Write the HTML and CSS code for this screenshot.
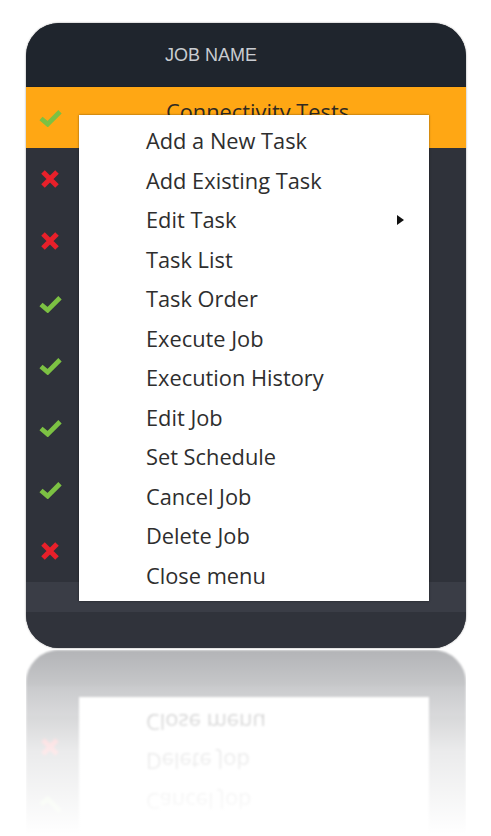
FILE: index.html
```html
<!DOCTYPE html>
<html>
<head>
<meta charset="utf-8">
<link rel="stylesheet" href="styles.css">
</head>
<body>
<div class="stage">
  <div class="card">
    <div class="header"><span class="col-title">JOB NAME</span></div>
    <div class="row selected"><span class="icon ok"><svg viewBox="0 0 26 20"><path d="M3 11 L10 17 L23 4"/></svg></span><span class="name">Connectivity Tests</span></div>
    <div class="row"><span class="icon bad"><svg viewBox="0 0 20 20"><path d="M3 3 L17 17 M17 3 L3 17"/></svg></span></div>
    <div class="row"><span class="icon bad"><svg viewBox="0 0 20 20"><path d="M3 3 L17 17 M17 3 L3 17"/></svg></span></div>
    <div class="row"><span class="icon ok"><svg viewBox="0 0 26 20"><path d="M3 11 L10 17 L23 4"/></svg></span></div>
    <div class="row"><span class="icon ok"><svg viewBox="0 0 26 20"><path d="M3 11 L10 17 L23 4"/></svg></span></div>
    <div class="row"><span class="icon ok"><svg viewBox="0 0 26 20"><path d="M3 11 L10 17 L23 4"/></svg></span></div>
    <div class="row"><span class="icon ok"><svg viewBox="0 0 26 20"><path d="M3 11 L10 17 L23 4"/></svg></span></div>
    <div class="row"><span class="icon bad"><svg viewBox="0 0 20 20"><path d="M3 3 L17 17 M17 3 L3 17"/></svg></span></div>
    <div class="footer"></div>
    <div class="bottom"></div>

    <ul class="menu">
      <li>Add a New Task</li>
      <li>Add Existing Task</li>
      <li>Edit Task<span class="arrow"></span></li>
      <li>Task List</li>
      <li>Task Order</li>
      <li>Execute Job</li>
      <li>Execution History</li>
      <li>Edit Job</li>
      <li>Set Schedule</li>
      <li>Cancel Job</li>
      <li>Delete Job</li>
      <li>Close menu</li>
    </ul>
  </div>

  <div class="reflection" aria-hidden="true">
    <div class="mirror">
      <div class="row partial"><span class="icon ok"><svg viewBox="0 0 26 20"><path d="M3 11 L10 17 L23 4"/></svg></span></div>
      <div class="row"><span class="icon bad"><svg viewBox="0 0 20 20"><path d="M3 3 L17 17 M17 3 L3 17"/></svg></span></div>
      <div class="footer"></div>
      <div class="bottom"></div>
      <ul class="menu mirror-menu">
        <li>Cancel Job</li>
        <li>Delete Job</li>
        <li>Close menu</li>
      </ul>
    </div>
  </div>
</div>
</body>
</html>
```
FILE: styles.css
```css
html, body {
  margin: 0;
  padding: 0;
  background: #ffffff;
}
.stage {
  padding: 23px 0 0 26px;
}
.card {
  position: relative;
  width: 440px;
  display: flex;
  flex-direction: column;
  border-radius: 33px;
  overflow: hidden;
  background: #30333b;
  box-shadow: 0 0 2px rgba(0, 0, 0, 0.45);
}
.header {
  height: 63px;
  background: #1f252d;
  display: flex;
  align-items: center;
  padding-left: 139px;
}
.col-title {
  font-family: "Liberation Sans", Arial, sans-serif;
  font-size: 18px;
  color: #c9ccd1;
  padding-top: 1px;
}
.row {
  flex-shrink: 0;
  height: 62px;
  background: #2f323a;
  display: flex;
  align-items: center;
}
.row.selected {
  background: #ffa714;
  border-top: 1px solid #1c2128;
  height: 61px;
}
.icon {
  width: 48px;
  display: flex;
  justify-content: center;
}
.icon svg {
  fill: none;
  stroke-width: 5;
  stroke-linecap: butt;
  stroke-linejoin: miter;
}
.icon.ok svg {
  width: 25px;
  height: 19px;
  stroke: #7cc143;
}
.icon.bad svg {
  width: 20px;
  height: 20px;
  stroke: #e8202a;
}
.name {
  margin-left: 92px;
  align-self: flex-start;
  padding-top: 10px;
  font-family: "Open Sans", "Noto Sans", sans-serif;
  font-size: 21.8px;
  color: #2f2a22;
}
.footer {
  flex-shrink: 0;
  height: 30px;
  background: #3a3d46;
}
.bottom {
  flex-shrink: 0;
  height: 36px;
  background: #30333b;
}
.menu {
  position: absolute;
  left: 53px;
  top: 92px;
  width: 350px;
  height: 486px;
  margin: 0;
  padding: 6px 0 0 0;
  box-sizing: border-box;
  list-style: none;
  background: #ffffff;
  box-shadow: 0 0 2px rgba(0, 0, 0, 0.5);
}
.menu li {
  position: relative;
  height: 39.55px;
  line-height: 39.55px;
  padding-left: 67px;
  font-family: "Open Sans", "Noto Sans", sans-serif;
  font-size: 21.8px;
  color: #2e2e2e;
}
.arrow {
  position: absolute;
  left: 318px;
  top: 15px;
  width: 0;
  height: 0;
  border-top: 5px solid transparent;
  border-bottom: 5px solid transparent;
  border-left: 7px solid #111111;
}

/* reflection */
.reflection {
  position: relative;
  width: 440px;
  height: 184px;
  margin-top: 2px;
  overflow: hidden;
}
.mirror {
  position: relative;
  height: 184px;
  display: flex;
  flex-direction: column;
  border-radius: 0 0 33px 33px;
  overflow: hidden;
  background: #30333b;
  transform: scaleY(-1);
  filter: blur(0.8px);
}
.row.partial {
  height: 56px;
  align-items: flex-end;
}
.row.partial .icon {
  padding-bottom: 18px;
}
.mirror-menu {
  top: 0;
  height: 137px;
  padding-top: 13px;
}
.reflection::after {
  content: "";
  position: absolute;
  inset: 0;
  background: linear-gradient(to bottom, rgba(255, 255, 255, 0.63) 0%, rgba(255, 255, 255, 0.9) 55%, #ffffff 100%);
}
```
